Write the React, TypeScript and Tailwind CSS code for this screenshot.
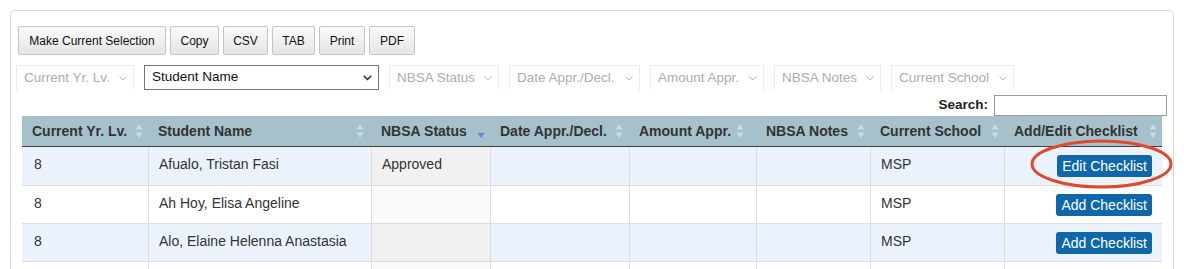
import React from "react";

type Col = { label: string; w: string; icon: "both" | "desc"; r: string; pl: string };

const cols: Col[] = [
  { label: "Current Yr. Lv.", w: "w-[126px]", icon: "both", r: "right-[5px]", pl: "pl-[12px]" },
  { label: "Student Name", w: "w-[223px]", icon: "both", r: "right-[7px]", pl: "pl-[10px]" },
  { label: "NBSA Status", w: "w-[119px]", icon: "desc", r: "right-[5px]", pl: "pl-[10px]" },
  { label: "Date Appr./Decl.", w: "w-[139px]", icon: "both", r: "right-[6px]", pl: "pl-[10px]" },
  { label: "Amount Appr.", w: "w-[127px]", icon: "both", r: "right-[12px]", pl: "pl-[10px]" },
  { label: "NBSA Notes", w: "w-[114px]", icon: "both", r: "right-[5px]", pl: "pl-[10px]" },
  { label: "Current School", w: "w-[134px]", icon: "both", r: "right-[5px]", pl: "pl-[10px]" },
  { label: "Add/Edit Checklist", w: "w-[158px]", icon: "both", r: "right-[5px]", pl: "pl-[10px]" },
];

const rows: { cells: string[]; btn: string | null }[] = [
  { cells: ["8", "Afualo, Tristan Fasi", "Approved", "", "", "", "MSP"], btn: "Edit Checklist" },
  { cells: ["8", "Ah Hoy, Elisa Angeline", "", "", "", "", "MSP"], btn: "Add Checklist" },
  { cells: ["8", "Alo, Elaine Helenna Anastasia", "", "", "", "", "MSP"], btn: "Add Checklist" },
  { cells: ["", "", "", "", "", "", ""], btn: null },
];

const buttons = [
  { t: "Make Current Selection", w: "w-[148px]" },
  { t: "Copy", w: "w-[49px]" },
  { t: "CSV", w: "w-[45px]" },
  { t: "TAB", w: "w-[43px]" },
  { t: "Print", w: "w-[46px]" },
  { t: "PDF", w: "w-[46px]" },
];

const filters = [
  { t: "Current Yr. Lv.", w: "w-[118px]" },
  { t: "NBSA Status", w: "w-[110px]" },
  { t: "Date Appr./Decl.", w: "w-[131px]" },
  { t: "Amount Appr.", w: "w-[114px]" },
  { t: "NBSA Notes", w: "w-[107px]" },
  { t: "Current School", w: "w-[123px]" },
];

function SortIcon({ kind }: { kind: "both" | "desc" }) {
  if (kind === "desc") {
    return (
      <svg width="8" height="16" viewBox="0 0 8 16">
        <path d="M0.5 10 H7.5 L4 15 Z" fill="#6f7ddc" />
      </svg>
    );
  }
  return (
    <svg width="8" height="16" viewBox="0 0 8 16">
      <path d="M4 1 L7.5 6.5 H0.5 Z" fill="#cddbe1" />
      <path d="M4 15 L7.5 9.5 H0.5 Z" fill="#cddbe1" />
    </svg>
  );
}

function Chevron({ dark }: { dark?: boolean }) {
  return dark ? (
    <svg width="9" height="6" viewBox="0 0 9 6">
      <polyline points="0.8,0.8 4.5,4.5 8.2,0.8" fill="none" stroke="#222" strokeWidth="1.4" />
    </svg>
  ) : (
    <svg width="8" height="5" viewBox="0 0 8 5">
      <polyline points="0.5,0.5 4,4 7.5,0.5" fill="none" stroke="#b8b8b8" strokeWidth="1" />
    </svg>
  );
}

function DisabledSelect({ t, w }: { t: string; w: string }) {
  return (
    <div className={`${w} h-[25px] border border-[#ececec] border-b-0 flex items-center justify-between pl-[7px] pr-[6px] text-[13.5px] text-[#adadad]`}>
      <span className="whitespace-nowrap">{t}</span>
      <Chevron />
    </div>
  );
}

export default function App() {
  return (
    <div className="relative w-[1184px] h-[269px] overflow-hidden bg-white font-['Liberation_Sans',Arial,sans-serif] text-[#333]">
      <div className="ml-[10px] mt-[10px] w-[1164px] h-[300px] border border-[#dcdcdc] rounded-[4px] pt-[15px]">
        {/* export buttons */}
        <div className="flex gap-[4px] ml-[7px] h-[29px]">
          {buttons.map((b) => (
            <div
              key={b.t}
              className={`${b.w} h-[29px] flex items-center justify-center border border-[#c6c6c6] rounded-[2px] bg-linear-to-b from-[#fbfbfb] to-[#e5e5e5] text-[12px] text-[#111] whitespace-nowrap`}
            >
              {b.t}
            </div>
          ))}
        </div>

        {/* column filters */}
        <div className="flex gap-[10px] ml-[5px] mt-[10px] h-[25px]">
          <DisabledSelect t={filters[0].t} w={filters[0].w} />
          <div className="w-[235px] h-[25px] border border-[#767676] bg-white flex items-center justify-between pl-[7px] pr-[6px] text-[13.5px] text-[#111]">
            <span>Student Name</span>
            <Chevron dark />
          </div>
          {filters.slice(1).map((f) => (
            <DisabledSelect key={f.t} t={f.t} w={f.w} />
          ))}
        </div>

        {/* search */}
        <div className="flex justify-end items-center gap-[6px] pr-[6px] mt-[5px] h-[21px]">
          <span className="font-bold text-[13.5px] text-[#222]">Search:</span>
          <div className="w-[173px] h-[21px] border border-[#9a9a9a] bg-white" />
        </div>

        {/* table */}
        <div className="ml-[11px] w-[1140px]">
          <div className="flex h-[31px] bg-[#a6c1cc] border-b border-[#3f3f3f]">
            {cols.map((c) => (
              <div key={c.label} className={`${c.w} relative h-[30px] flex items-center pl-[10px] font-bold text-[14px] text-[#333] whitespace-nowrap`}>
                {c.label}
                <span className={`absolute ${c.r} top-[7px] flex`}>
                  <SortIcon kind={c.icon} />
                </span>
              </div>
            ))}
          </div>
          {rows.map((r, ri) => {
            const odd = ri % 2 === 0;
            return (
              <div
                key={ri}
                className={`flex h-[38px] ${ri > 0 ? "border-t border-[#dddddd]" : ""} ${odd ? "bg-[#ebf2fc]" : "bg-white"}`}
              >
                {cols.map((c, ci) => {
                  const sorted = ci === 2;
                  const bg = sorted ? (odd ? "bg-[#f1f1f1]" : "bg-[#fafafa]") : "";
                  const border = ci > 0 ? "border-l border-[#dddddd]" : "";
                  if (ci === 7) {
                    return (
                      <div key={ci} className={`${c.w} ${border} pt-[8px] pr-[10px] flex justify-end items-start`}>
                        {r.btn && (
                          <span className="h-[22px] px-[5px] rounded-[3px] bg-[#0e67a8] text-white text-[14px] leading-[22px] whitespace-nowrap">
                            {r.btn}
                          </span>
                        )}
                      </div>
                    );
                  }
                  return (
                    <div key={ci} className={`${c.w} ${border} ${bg} ${c.pl} pt-[9px] text-[14px] leading-[17px] text-[#333] whitespace-nowrap`}>
                      {r.cells[ci]}
                    </div>
                  );
                })}
              </div>
            );
          })}
        </div>
      </div>

      {/* red annotation ellipse */}
      <svg className="absolute left-[1025px] top-[135px]" width="155" height="60" viewBox="0 0 155 60">
        <ellipse cx="76.5" cy="29" rx="69.5" ry="23" fill="none" stroke="#e1492f" strokeWidth="3" />
      </svg>
    </div>
  );
}
